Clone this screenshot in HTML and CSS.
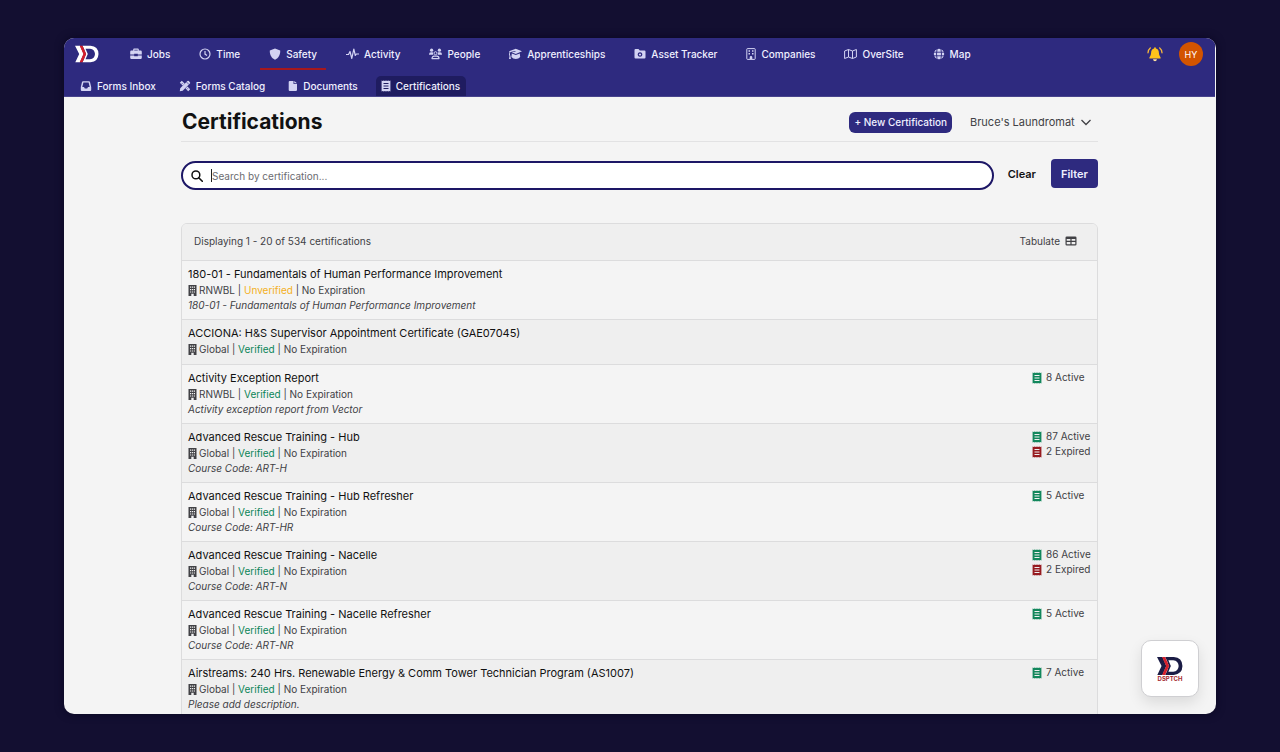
FILE: index.html
```html
<!DOCTYPE html>
<html lang="en">
<head>
  <meta charset="UTF-8">
  <meta name="viewport" content="width=device-width, initial-scale=1">
  <title>Certifications</title>
  <link rel="stylesheet" href="styles.css">
</head>
<body>
  <!-- icon sprite -->
  <svg class="sprite" aria-hidden="true">
    <symbol id="i-jobs" viewBox="0 0 12 12">
      <path fill-rule="evenodd" d="M3.2 2.6V1.5Q3.2.6 4.1.6h3.8q.9 0 .9.9v1.1h1.8q1.2 0 1.2 1.2v2.7H7.8v-.8H4.2v.8H.2V3.8q0-1.2 1.2-1.2zm1.1 0h3.4v-.9H4.3zM.2 7.4h4v.9h3.600v-.9h4v2.400q0 1.200-1.200 1.200H1.400Q.2 11 .2 9.800z"/>
    </symbol>
    <symbol id="i-time" viewBox="0 0 12 12">
      <circle cx="6" cy="6" r="5" fill="none" stroke="currentColor" stroke-width="1.2"/>
      <path d="M6 3v3.100l2 1.300" fill="none" stroke="currentColor" stroke-width="1.2"/>
    </symbol>
    <symbol id="i-shield" viewBox="0 0 12 12">
      <path d="M6 .4 11.200 2.500c.2 4.200-1.600 7.600-5.200 9.200C2.400 10.100.6 6.700.8 2.500z"/>
    </symbol>
    <symbol id="i-activity" viewBox="0 0 13 12">
      <path d="M0 6.500h2.500L4 3.500l1.800 7L7.800 1l1.500 6.500 1-1.500H13" fill="none" stroke="currentColor" stroke-width="1.200" stroke-linejoin="round"/>
    </symbol>
    <symbol id="i-people" viewBox="0 0 13 12">
      <circle cx="2.600" cy="2.200" r="1.600"/><circle cx="10.400" cy="2.200" r="1.600"/>
      <path d="M0 6.600q0-2.400 2-2.400h1.200q.6 0 1 .3-.6 1.300.2 2.300H.2zM13 6.600q0-2.400-2-2.400H9.800q-.6 0-1 .3.600 1.300-.2 2.300h4.200z"/>
      <circle cx="6.500" cy="5.200" r="1.500" fill="none" stroke="currentColor"/>
      <path d="M3 10.600q0-2.400 2.200-2.400h2.600q2.200 0 2.200 2.400z" fill="none" stroke="currentColor" stroke-width="1.200" stroke-linejoin="round"/>
    </symbol>
    <symbol id="i-grad" viewBox="0 0 13 12">
      <path d="M6.800.8 13 3.300 6.800 5.900 2.600 4.300l3.900-.6-.1-.6-4.900.8q-.7.900-.6 2.300L1.400 8 1.900 11H0l.5-3L0 6.700q0-1.900.6-2.800L0 3.300z"/>
      <path d="M2.800 5.600 6.800 7l4-1.500.4 3.500q-1.600 2-4.400 2T2.400 9z"/>
    </symbol>
    <symbol id="i-folder" viewBox="0 0 12 12">
      <path fill-rule="evenodd" d="M1.500 1h3l1.300 1.400h4.700q1 0 1 1v6.200q0 1-1 1h-9q-1 0-1-1V2q0-1 1-1zM6 4.200a2.300 2.300 0 1 0 .01 0zM6 5.400a1.100 1.100 0 1 1-.01 0z"/>
    </symbol>
    <symbol id="i-building" viewBox="0 0 10 12">
      <path d="M1.500.6h7q.7 0 .7.700v9.400q0 .7-.7.700h-7q-.7 0-.7-.7V1.300q0-.7.700-.7z" fill="none" stroke="currentColor"/>
      <path d="M2.500 2.300H4v1.500H2.500zM6 2.300h1.500v1.500H6zM2.500 4.900H4v1.500H2.500zM6 4.900h1.500v1.500H6zM3.700 11V9.200q0-1.100 1.300-1.100t1.300 1.100V11z"/>
    </symbol>
    <symbol id="i-building-solid" viewBox="0 0 9 11">
      <path fill-rule="evenodd" d="M.5 0h8v11H5.700V8.700H3.300V11H.5zM2 1.500v1.300h1.200V1.500zm1.900 0v1.300h1.200V1.500zm1.900 0v1.300H7V1.500zM2 4v1.300h1.200V4zm1.900 0v1.300h1.200V4zm1.900 0v1.300H7V4zM2 6.400v1.200h1.200V6.400zm1.900 0v1.200h1.200V6.400zm1.900 0v1.200H7V6.400z"/>
    </symbol>
    <symbol id="i-map" viewBox="0 0 13 12">
      <path d="M.6 3 4.500 1.500l4 1.500 3.900-1.500V9L8.500 10.500l-4-1.500-3.900 1.500zM4.500 1.500V9M8.500 3v7.500" fill="none" stroke="currentColor" stroke-linejoin="round"/>
    </symbol>
    <symbol id="i-globe" viewBox="0 0 12 12">
      <circle cx="6" cy="6" r="5.200"/>
      <path d="M.5 4.200h11M.5 7.800h11M4.100.5q-1.200 5.500 0 11M7.900.5q1.200 5.500 0 11" fill="none" stroke="#2e2a7f" stroke-width=".9"/>
    </symbol>
    <symbol id="i-inbox" viewBox="0 0 12 12">
      <path fill-rule="evenodd" d="M3 1.200h6q.8 0 1 .8l1.200 5v3q0 1-1 1H1.800q-1 0-1-1V7L2 2q.2-.8 1-.8zm.4 1.400L2.300 7H4l.8 1.500h2.400L8 7h1.700L8.600 2.600z"/>
    </symbol>
    <symbol id="i-tools" viewBox="0 0 12 12">
      <path d="M.8 2.800 2.800.8l2.800 2.800-2 2zM6.500 8.400l2-2 2.700 2.800-2 2zM8.400 1.100q.7-.7 1.400 0l1.100 1.100q.7.700 0 1.400L3.700 10.800.8 11.200l.4-2.900z"/>
      <path d="m2.500 4.200 1.100-1.100M7.800 9.400l1.100-1.100M7.400 1.900l2.700 2.700" stroke="#2e2a7f" stroke-width=".7"/>
    </symbol>
    <symbol id="i-file" viewBox="0 0 10 12">
      <path d="M1.800.9h3.700v3h3.500v6.200q0 1-1.200 1h-6Q.7 11.100.7 10.100V1.900Q.7.900 1.800.9zM6.300.9 9 3.200H6.300z"/>
    </symbol>
    <symbol id="i-receipt" viewBox="0 0 10 12">
      <path fill-rule="evenodd" d="M.6.5l1.100.6L2.800.5l1.100.6L5 .5l1.100.6L7.200.5l1.100.6L9.400.5v11l-1.100-.6-1.100.6-1.100-.6-1.100.6-1.100-.6-1.100.6-1.100-.6-1.100.6zM2.500 3v.9h5V3zm0 2.500v.9h5v-.9zm0 2.500v.9h5V8z"/>
    </symbol>
    <symbol id="i-search" viewBox="0 0 12 12">
      <circle cx="4.900" cy="4.900" r="3.900" fill="none" stroke="currentColor" stroke-width="1.500"/>
      <path d="m7.700 7.700 3.600 3.600" stroke="currentColor" stroke-width="1.600" stroke-linecap="round"/>
    </symbol>
    <symbol id="i-chevron" viewBox="0 0 12 12">
      <path d="m1.500 4 4.500 4.500L10.500 4" fill="none" stroke="currentColor" stroke-width="1.300"/>
    </symbol>
    <symbol id="i-table" viewBox="0 0 12 12">
      <path fill-rule="evenodd" d="M1.800 1.500h8.400q1.300 0 1.300 1.200v6.600q0 1.200-1.300 1.200H1.800Q.5 10.500.5 9.300V2.700q0-1.200 1.300-1.200zM1.700 4v1.800h3.700V4zm4.900 0v1.800h3.700V4zM1.700 7v2.300h3.700V7zm4.900 0v2.300h3.700V7z"/>
    </symbol>
    <symbol id="i-bell" viewBox="0 0 16 16">
      <path d="M8 1.200q.9 0 .9 1v.3q3 .7 3 4.300 0 3 1.700 4.600v1.100H2.400v-1.100q1.700-1.600 1.700-4.600 0-3.600 3-4.300v-.3q0-1 .9-1z" fill="#ffc21a"/>
      <path d="M6 13.300h4q-.4 1.900-2 1.900t-2-1.900z" fill="#ffe2a0"/>
      <path d="M3.300 2Q1.200 3.600 1 6.800M12.700 2q2.100 1.600 2.300 4.800" fill="none" stroke="#f6b83c" stroke-width="1.300" stroke-linecap="round"/>
    </symbol>
    <symbol id="i-logo" viewBox="0 0 24 18">
      <path d="M0 .8h5L8.600 9 5 17.200H.3L4.200 9z"/>
      <path fill-rule="evenodd" d="M7.500.8h8q7.800.6 8 8.200-.2 7.600-8 8.200h-8L9 14.300h6q4.700-.5 5-5.300-.3-4.800-5-5.300H9zM9 3.700h1.500L12.800 9l-2.300 5.300H9L11 9z"/>
      <path d="M4.700.8h2.800L11.200 9l-3.700 8.200H4.700L8.400 9z" fill="#d3202c"/>
    </symbol>
  </svg>

  <div class="window">
    <header class="topbar">
      <div class="topbar-row">
        <a class="logo" href="#" aria-label="Home"><svg><use href="#i-logo"/></svg></a>
        <nav class="nav" aria-label="Main">
          <a href="#"><svg class="icon"><use href="#i-jobs"/></svg>Jobs</a>
          <a href="#"><svg class="icon"><use href="#i-time"/></svg>Time</a>
          <a href="#" class="active"><svg class="icon"><use href="#i-shield"/></svg>Safety</a>
          <a href="#"><svg class="icon wide"><use href="#i-activity"/></svg>Activity</a>
          <a href="#"><svg class="icon wide"><use href="#i-people"/></svg>People</a>
          <a href="#"><svg class="icon wide"><use href="#i-grad"/></svg>Apprenticeships</a>
          <a href="#"><svg class="icon"><use href="#i-folder"/></svg>Asset Tracker</a>
          <a href="#"><svg class="icon narrow"><use href="#i-building"/></svg>Companies</a>
          <a href="#"><svg class="icon wide"><use href="#i-map"/></svg>OverSite</a>
          <a href="#"><svg class="icon"><use href="#i-globe"/></svg>Map</a>
        </nav>
        <button class="bell" type="button" aria-label="Notifications"><svg><use href="#i-bell"/></svg></button>
        <button class="avatar" type="button">HY</button>
      </div>
      <nav class="subnav" aria-label="Safety">
        <a href="#"><svg class="icon"><use href="#i-inbox"/></svg>Forms Inbox</a>
        <a href="#"><svg class="icon"><use href="#i-tools"/></svg>Forms Catalog</a>
        <a href="#"><svg class="icon narrow"><use href="#i-file"/></svg>Documents</a>
        <a href="#" class="active"><svg class="icon narrow"><use href="#i-receipt"/></svg>Certifications</a>
      </nav>
    </header>

    <main class="content">
      <div class="page-head">
        <h1>Certifications</h1>
        <button class="btn-new" type="button">+ New Certification</button>
        <div class="company">
          <select aria-label="Company"><option>Bruce's Laundromat</option></select>
          <svg class="icon"><use href="#i-chevron"/></svg>
        </div>
      </div>

      <form class="filters">
        <label class="search">
          <svg class="icon"><use href="#i-search"/></svg>
          <input type="text" placeholder="Search by certification..." aria-label="Search by certification">
        </label>
        <button class="btn-clear" type="reset">Clear</button>
        <button class="btn-filter" type="button">Filter</button>
      </form>

      <section class="panel">
        <div class="panel-head">
          <span>Displaying 1 - 20 of 534 certifications</span>
          <button class="tabulate" type="button">Tabulate <svg class="icon"><use href="#i-table"/></svg></button>
        </div>
        <ul class="certs">
          <li>
            <div class="cert">
              <a href="#">180-01 - Fundamentals of Human Performance Improvement</a>
              <p><svg class="org"><use href="#i-building-solid"/></svg>RNWBL | <span class="unverified">Unverified</span> | No Expiration</p>
              <p class="desc">180-01 - Fundamentals of Human Performance Improvement</p>
            </div>
          </li>
          <li>
            <div class="cert">
              <a href="#">ACCIONA: H&amp;S Supervisor Appointment Certificate (GAE07045)</a>
              <p><svg class="org"><use href="#i-building-solid"/></svg>Global | <span class="verified">Verified</span> | No Expiration</p>
            </div>
          </li>
          <li>
            <div class="cert">
              <a href="#">Activity Exception Report</a>
              <p><svg class="org"><use href="#i-building-solid"/></svg>RNWBL | <span class="verified">Verified</span> | No Expiration</p>
              <p class="desc">Activity exception report from Vector</p>
            </div>
            <div class="counts">
              <p><svg class="ok"><use href="#i-receipt"/></svg>8 Active</p>
            </div>
          </li>
          <li>
            <div class="cert">
              <a href="#">Advanced Rescue Training - Hub</a>
              <p><svg class="org"><use href="#i-building-solid"/></svg>Global | <span class="verified">Verified</span> | No Expiration</p>
              <p class="desc">Course Code: ART-H</p>
            </div>
            <div class="counts">
              <p><svg class="ok"><use href="#i-receipt"/></svg>87 Active</p>
              <p><svg class="bad"><use href="#i-receipt"/></svg>2 Expired</p>
            </div>
          </li>
          <li>
            <div class="cert">
              <a href="#">Advanced Rescue Training - Hub Refresher</a>
              <p><svg class="org"><use href="#i-building-solid"/></svg>Global | <span class="verified">Verified</span> | No Expiration</p>
              <p class="desc">Course Code: ART-HR</p>
            </div>
            <div class="counts">
              <p><svg class="ok"><use href="#i-receipt"/></svg>5 Active</p>
            </div>
          </li>
          <li>
            <div class="cert">
              <a href="#">Advanced Rescue Training - Nacelle</a>
              <p><svg class="org"><use href="#i-building-solid"/></svg>Global | <span class="verified">Verified</span> | No Expiration</p>
              <p class="desc">Course Code: ART-N</p>
            </div>
            <div class="counts">
              <p><svg class="ok"><use href="#i-receipt"/></svg>86 Active</p>
              <p><svg class="bad"><use href="#i-receipt"/></svg>2 Expired</p>
            </div>
          </li>
          <li>
            <div class="cert">
              <a href="#">Advanced Rescue Training - Nacelle Refresher</a>
              <p><svg class="org"><use href="#i-building-solid"/></svg>Global | <span class="verified">Verified</span> | No Expiration</p>
              <p class="desc">Course Code: ART-NR</p>
            </div>
            <div class="counts">
              <p><svg class="ok"><use href="#i-receipt"/></svg>5 Active</p>
            </div>
          </li>
          <li>
            <div class="cert">
              <a href="#">Airstreams: 240 Hrs. Renewable Energy &amp; Comm Tower Technician Program (AS1007)</a>
              <p><svg class="org"><use href="#i-building-solid"/></svg>Global | <span class="verified">Verified</span> | No Expiration</p>
              <p class="desc">Please add description.</p>
            </div>
            <div class="counts">
              <p><svg class="ok"><use href="#i-receipt"/></svg>7 Active</p>
            </div>
          </li>
        </ul>
      </section>
    </main>

    <button class="launcher" type="button">
      <svg><use href="#i-logo"/></svg>
      <span>DSPTCH</span>
    </button>
  </div>
</body>
</html>
```
FILE: styles.css
```css
:root {
  --navy: #2e2a7f;
  --line: #dcdcdd;
  --text: #414145;
}

* {
  box-sizing: border-box;
}

body {
  margin: 0;
  height: 100vh;
  padding: 38px 64px;
  background: #130f31;
  font-family: Inter, "Liberation Sans", sans-serif;
  font-size: 10px;
  color: var(--text);
}

a {
  color: inherit;
  text-decoration: none;
}

button,
input,
select {
  font: inherit;
  color: inherit;
  border: 0;
  background: none;
  padding: 0;
  margin: 0;
}

h1,
p,
ul {
  margin: 0;
  padding: 0;
}

svg {
  fill: currentColor;
  flex: none;
}

.sprite {
  position: absolute;
  width: 0;
  height: 0;
}

.icon {
  width: 12px;
  height: 12px;
}

.icon.narrow {
  width: 10px;
}

.icon.wide {
  width: 13px;
}

.window {
  position: relative;
  height: 100%;
  padding-right: 1px;
  overflow: hidden;
  border-radius: 10px;
  background: #f4f4f4;
  box-shadow: 0 0 8px #0a0722;
}

/* top bar */
.topbar {
  background: var(--navy);
  color: #f0f0ff;
  font-weight: 500;
  border-bottom: 1px solid #48448c;
}

.topbar-row {
  display: flex;
  align-items: center;
  height: 32px;
  padding: 0 12px 0 11px;
}

.logo {
  color: #fff;
}

.logo svg {
  display: block;
  width: 24px;
  height: 18px;
}

.nav {
  display: flex;
  gap: 11px;
  margin: 0 auto 0 22px;
}

.nav a {
  display: flex;
  align-items: center;
  gap: 5px;
  height: 32px;
  padding: 0 9px;
  border-bottom: 2px solid transparent;
  border-top: 2px solid transparent;
}

.nav .active {
  border-bottom-color: #a5181e;
}

.nav .icon,
.subnav .icon {
  color: #d3d3f3;
}

.bell svg {
  display: block;
  width: 16px;
  height: 16px;
}

.avatar {
  width: 24px;
  height: 24px;
  margin-left: 16px;
  border-radius: 50%;
  background: #d35400;
  color: #fff;
  font-size: 9px;
  font-weight: 400;
}

.subnav {
  display: flex;
  gap: 12px;
  padding: 6px 11px 0;
}

.subnav a {
  display: flex;
  align-items: center;
  gap: 5px;
  height: 20px;
  padding: 0 6px 0 5px;
  border-radius: 5px 5px 0 0;
}

.subnav .active {
  background: #1f1c60;
}

/* page */
.content {
  max-width: 917px;
  margin: 0 auto;
}

.page-head {
  display: flex;
  align-items: center;
  height: 45px;
  padding: 6px 6px 0 1px;
  border-bottom: 1px solid #e2e2e3;
}

.page-head h1 {
  margin-right: auto;
  font-size: 21px;
  line-height: 28px;
  font-weight: 700;
  color: #111;
}

.btn-new {
  height: 21px;
  padding: 0 5px;
  border-radius: 6px;
  background: var(--navy);
  color: #f0f0ff;
  font-weight: 500;
}

.company {
  display: flex;
  align-items: center;
  gap: 5px;
  margin-left: 18px;
  font-size: 11px;
}

.company select {
  appearance: none;
}

.filters {
  display: flex;
  align-items: flex-start;
  margin-top: 17px;
}

.search {
  flex: 1;
  display: flex;
  align-items: center;
  gap: 8px;
  height: 29px;
  margin-top: 2px;
  padding: 0 10px 0 8px;
  border: 2px solid #1d1766;
  border-radius: 15px;
  background: #fff;
}

.search .icon {
  color: #111;
}

.search input {
  flex: 1;
  height: 13px;
  border-left: 1px solid #222;
  outline: none;
}

.search input::placeholder {
  color: #6b6b70;
}

.btn-clear,
.btn-filter {
  height: 29px;
  font-size: 11px;
  font-weight: 600;
}

.btn-clear {
  margin: 0 15px 0 14px;
  color: #111;
}

.btn-filter {
  padding: 0 10px;
  border-radius: 4px;
  background: var(--navy);
  color: #f0f0ff;
}

/* list */
.panel {
  margin-top: 33px;
  border: 1px solid var(--line);
  border-radius: 6px 6px 0 0;
}

.panel-head {
  display: flex;
  align-items: center;
  justify-content: space-between;
  height: 37px;
  padding: 0 20px 2px 12px;
  border-bottom: 1px solid var(--line);
  border-radius: 5px 5px 0 0;
  background: #efefef;
}

.tabulate {
  display: flex;
  align-items: center;
  gap: 5px;
}

.certs {
  list-style: none;
}

.certs li {
  display: flex;
  justify-content: space-between;
  min-height: 45px;
  padding: 5px 6px 6px;
  border-bottom: 1px solid var(--line);
}

.certs li:nth-child(even) {
  background: #efefef;
}

.certs p {
  display: flex;
  align-items: center;
  white-space: pre;
  line-height: 15px;
}

.cert a {
  display: block;
  font-size: 11px;
  line-height: 17px;
  color: #111;
}

.cert .desc {
  font-style: italic;
}

.org {
  width: 9px;
  height: 11px;
  margin-right: 2px;
}

.verified {
  color: #0a8558;
}

.unverified {
  color: #f3b01c;
}

.counts {
  min-width: 59px;
}

.counts svg {
  width: 10px;
  height: 12px;
  margin-right: 4px;
}

.counts .ok {
  color: #12875c;
}

.counts .bad {
  color: #971b20;
}

/* floating chat button */
.launcher {
  position: absolute;
  right: 17px;
  bottom: 17px;
  display: flex;
  flex-direction: column;
  align-items: center;
  justify-content: center;
  width: 58px;
  height: 57px;
  border: 1px solid #cfcfd2;
  border-radius: 10px;
  background: #fff;
  box-shadow: 0 6px 14px rgba(0, 0, 0, 0.1);
  color: #1b1c45;
}

.launcher svg {
  width: 26px;
  height: 20px;
}

.launcher span {
  font-size: 6px;
  line-height: 6px;
  font-weight: 700;
  color: #a3262c;
}
```
